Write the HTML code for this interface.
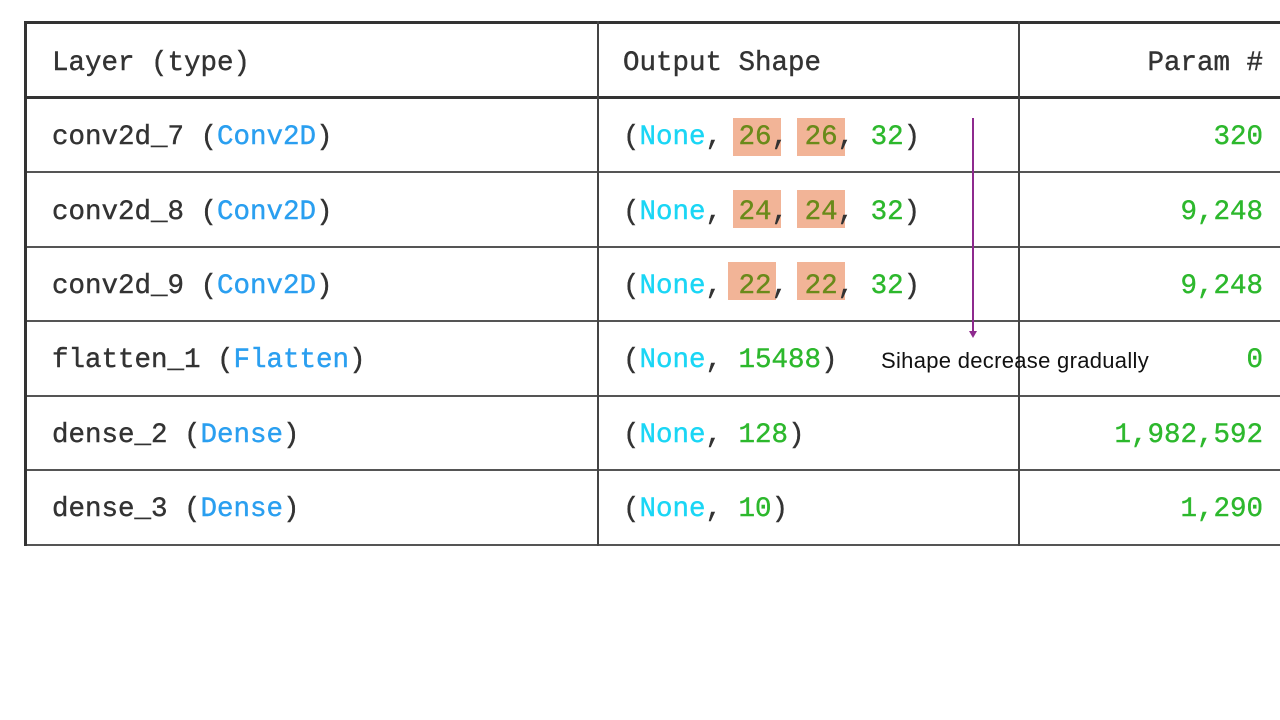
<!DOCTYPE html><html><head><style>
body{margin:0;width:1280px;height:720px;background:#fff;position:relative;overflow:hidden;font-family:"Liberation Mono",monospace;}
.t{position:absolute;font-size:27.5px;line-height:40px;color:#333;white-space:pre;-webkit-text-stroke:0.4px currentColor;}
.r{text-align:right;}
.b{color:#2a9ff0}.n{color:#1ad6f5}.g{color:#2db82d}.o{color:#6a8a1a}
.h{position:absolute;left:24px;width:1256px;background:#333;}
.v{position:absolute;width:2px;background:#444;}
.hl{position:absolute;background:#f2b497;width:48px;height:38px;}
</style></head><body>
<div class="h" style="top:21px;height:3px"></div>
<div class="h" style="top:96px;height:3px"></div>
<div class="h" style="top:171px;height:2px;background:#555"></div>
<div class="h" style="top:246px;height:2px;background:#555"></div>
<div class="h" style="top:320px;height:2px;background:#555"></div>
<div class="h" style="top:395px;height:2px;background:#555"></div>
<div class="h" style="top:469px;height:2px;background:#555"></div>
<div class="h" style="top:544px;height:2px;background:#555"></div>
<div class="v" style="left:24px;top:21px;height:525px;width:3px;background:#333"></div>
<div class="v" style="left:597px;top:21px;height:525px"></div>
<div class="v" style="left:1018px;top:21px;height:525px"></div>
<div class="hl" style="left:733px;top:118px"></div><div class="hl" style="left:797px;top:118px"></div>
<div class="hl" style="left:733px;top:190px"></div><div class="hl" style="left:797px;top:190px"></div>
<div class="hl" style="left:728px;top:262px"></div><div class="hl" style="left:797px;top:262px"></div>
<div class="t" style="left:52px;top:44px">Layer (type)</div>
<div class="t" style="left:623px;top:44px">Output Shape</div>
<div class="t r" style="right:17px;top:44px">Param #</div>
<div class="t" style="left:52px;top:118px">conv2d_7 (<span class="b">Conv2D</span>)</div>
<div class="t" style="left:52px;top:193px">conv2d_8 (<span class="b">Conv2D</span>)</div>
<div class="t" style="left:52px;top:267px">conv2d_9 (<span class="b">Conv2D</span>)</div>
<div class="t" style="left:52px;top:341px">flatten_1 (<span class="b">Flatten</span>)</div>
<div class="t" style="left:52px;top:416px">dense_2 (<span class="b">Dense</span>)</div>
<div class="t" style="left:52px;top:490px">dense_3 (<span class="b">Dense</span>)</div>
<div class="t" style="left:623px;top:118px">(<span class="n">None</span>, <span class="o">26</span>, <span class="o">26</span>, <span class="g">32</span>)</div>
<div class="t" style="left:623px;top:193px">(<span class="n">None</span>, <span class="o">24</span>, <span class="o">24</span>, <span class="g">32</span>)</div>
<div class="t" style="left:623px;top:267px">(<span class="n">None</span>, <span class="o">22</span>, <span class="o">22</span>, <span class="g">32</span>)</div>
<div class="t" style="left:623px;top:341px">(<span class="n">None</span>, <span class="g">15488</span>)</div>
<div class="t" style="left:623px;top:416px">(<span class="n">None</span>, <span class="g">128</span>)</div>
<div class="t" style="left:623px;top:490px">(<span class="n">None</span>, <span class="g">10</span>)</div>
<div class="t r g" style="right:17px;top:118px">320</div>
<div class="t r g" style="right:17px;top:193px">9,248</div>
<div class="t r g" style="right:17px;top:267px">9,248</div>
<div class="t r g" style="right:17px;top:341px">0</div>
<div class="t r g" style="right:17px;top:416px">1,982,592</div>
<div class="t r g" style="right:17px;top:490px">1,290</div>
<svg style="position:absolute;left:0;top:0" width="1280" height="720"><line x1="973" y1="118" x2="973" y2="332" stroke="#8e2a8e" stroke-width="2"/><polygon points="969,331 977,331 973,338" fill="#8e2a8e"/></svg>
<div style="position:absolute;left:881px;top:348px;font-family:'Liberation Sans',sans-serif;font-size:22px;letter-spacing:0.3px;color:#111;white-space:pre">Sihape decrease gradually</div>
</body></html>
